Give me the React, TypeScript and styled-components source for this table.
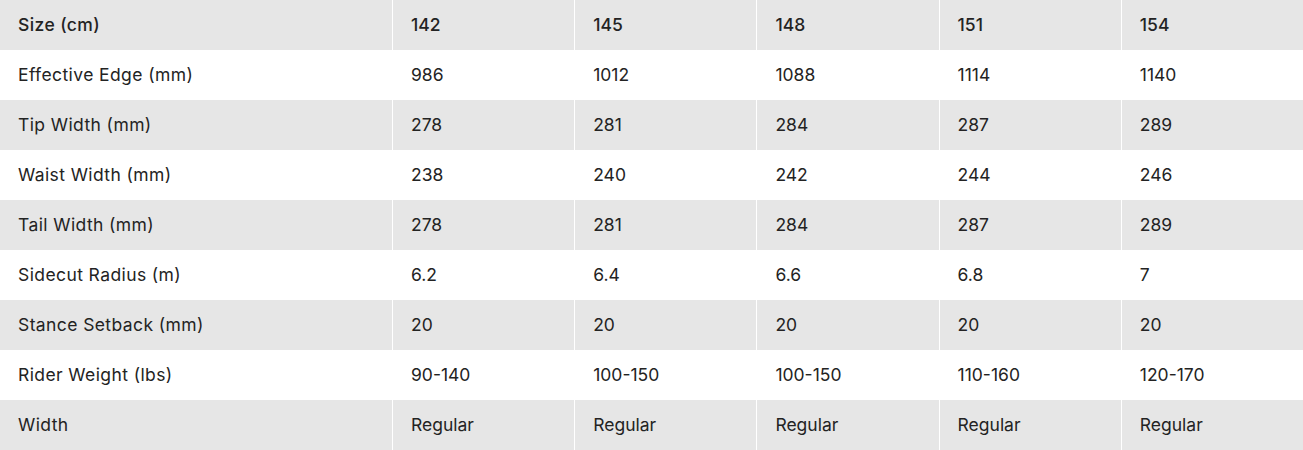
import React from "react";
import styled, { createGlobalStyle } from "styled-components";

const GlobalStyle = createGlobalStyle`
  body {
    margin: 0;
    background: #ffffff;
    font-family: "Inter", "Noto Sans", sans-serif;
    color: #232323;
  }
`;

const Table = styled.div`
  width: 1303px;
  display: grid;
  grid-template-columns: 392px repeat(5, 1fr);
`;

const Cell = styled.div<{ $shaded: boolean; $head: boolean; $label?: boolean }>`
  height: 50px;
  display: flex;
  align-items: center;
  padding: 0 0 1px 18px;
  box-sizing: border-box;
  font-size: 17.5px;
  font-weight: ${(p) => (p.$head ? 500 : 400)};
  letter-spacing: ${(p) => (p.$label ? "0.4px" : "0")};
  background: ${(p) => (p.$shaded ? "#e6e6e6" : "#ffffff")};
  border-left: ${(p) => (p.$label ? "none" : "1.5px solid #ffffff")};
`;

type Row = { label: string; values: string[] };

const rows: Row[] = [
  { label: "Size (cm)", values: ["142", "145", "148", "151", "154"] },
  { label: "Effective Edge (mm)", values: ["986", "1012", "1088", "1114", "1140"] },
  { label: "Tip Width (mm)", values: ["278", "281", "284", "287", "289"] },
  { label: "Waist Width (mm)", values: ["238", "240", "242", "244", "246"] },
  { label: "Tail Width (mm)", values: ["278", "281", "284", "287", "289"] },
  { label: "Sidecut Radius (m)", values: ["6.2", "6.4", "6.6", "6.8", "7"] },
  { label: "Stance Setback (mm)", values: ["20", "20", "20", "20", "20"] },
  { label: "Rider Weight (lbs)", values: ["90-140", "100-150", "100-150", "110-160", "120-170"] },
  { label: "Width", values: ["Regular", "Regular", "Regular", "Regular", "Regular"] },
];

const App = () => {
  return (
    <>
      <GlobalStyle />
      <Table>
        {rows.map((row, i) => (
          <React.Fragment key={row.label}>
            <Cell $shaded={i % 2 === 0} $head={i === 0} $label>{row.label}</Cell>
            {row.values.map((v, j) => (
              <Cell key={j} $shaded={i % 2 === 0} $head={i === 0}>{v}</Cell>
            ))}
          </React.Fragment>
        ))}
      </Table>
    </>
  );
};

export default App;
